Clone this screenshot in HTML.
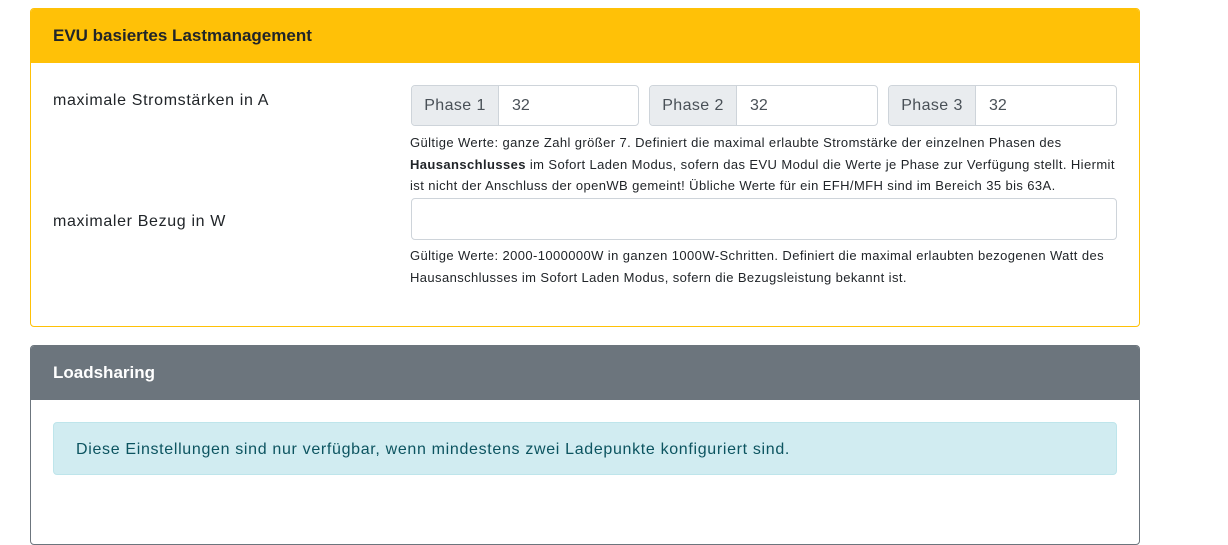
<!DOCTYPE html>
<html><head><meta charset="utf-8"><style>
*{box-sizing:border-box}
body{margin:0;background:#fff;font-family:"Liberation Sans",sans-serif;color:#212529;width:1228px;height:507px;overflow:hidden;position:relative}
.card{position:absolute;left:30px;width:1110px;border:1px solid;border-radius:4px;overflow:hidden}
.hdr{height:54px;padding:0 22px;font-weight:bold;font-size:17px;line-height:54px}
.abs{position:absolute}
.lbl{font-size:16px;left:22px;letter-spacing:0.65px}
.ig{position:absolute;top:76px;height:41px;border:1px solid #ced4da;border-radius:4px;display:flex;font-size:16px;overflow:hidden;background:#fff}
.ig .p{width:87px;background:#e9ecef;border-right:1px solid #ced4da;text-align:center;line-height:40px;color:#495057;letter-spacing:0.4px}
.ig .v{padding-left:13px;line-height:40px;color:#495057}
.sm{font-size:13px;line-height:21.5px;left:379px;width:712px;letter-spacing:0.4px}
</style></head><body>
<div class="card" style="top:8px;height:319px;border-color:#ffc107">
<div class="hdr" style="background:#ffc107;color:#212529;border-bottom:1px solid #ffc107">EVU basiertes Lastmanagement</div>
<div class="abs lbl" style="top:83px">maximale Stromstärken in A</div>
<div class="ig" style="left:380px;width:228px"><div class="p">Phase 1</div><div class="v">32</div></div>
<div class="ig" style="left:618px;width:229px"><div class="p">Phase 2</div><div class="v">32</div></div>
<div class="ig" style="left:857px;width:229px"><div class="p">Phase 3</div><div class="v">32</div></div>
<div class="abs sm" style="top:123px">Gültige Werte: ganze Zahl größer 7. Definiert die maximal erlaubte Stromstärke der einzelnen Phasen des <b>Hausanschlusses</b> im Sofort Laden Modus, sofern das EVU Modul die Werte je Phase zur Verfügung stellt. Hiermit ist nicht der Anschluss der openWB gemeint! Übliche Werte für ein EFH/MFH sind im Bereich 35 bis 63A.</div>
<div class="abs lbl" style="top:204px">maximaler Bezug in W</div>
<div class="abs" style="left:380px;top:189px;width:706px;height:42px;border:1px solid #ced4da;border-radius:4px"></div>
<div class="abs sm" style="top:236px">Gültige Werte: 2000-1000000W in ganzen 1000W-Schritten. Definiert die maximal erlaubten bezogenen Watt des Hausanschlusses im Sofort Laden Modus, sofern die Bezugsleistung bekannt ist.</div>
</div>
<div class="card" style="top:345px;height:200px;border-color:#6c757d">
<div class="hdr" style="background:#6c757d;color:#fff">Loadsharing</div>
<div class="abs" style="left:22px;top:76px;width:1064px;height:53px;background:#d1ecf1;border:1px solid #bee5eb;border-radius:4px;color:#0c5460;font-size:16px;line-height:53px;padding-left:22px;letter-spacing:0.67px">Diese Einstellungen sind nur verfügbar, wenn mindestens zwei Ladepunkte konfiguriert sind.</div>
</div>
</body></html>
